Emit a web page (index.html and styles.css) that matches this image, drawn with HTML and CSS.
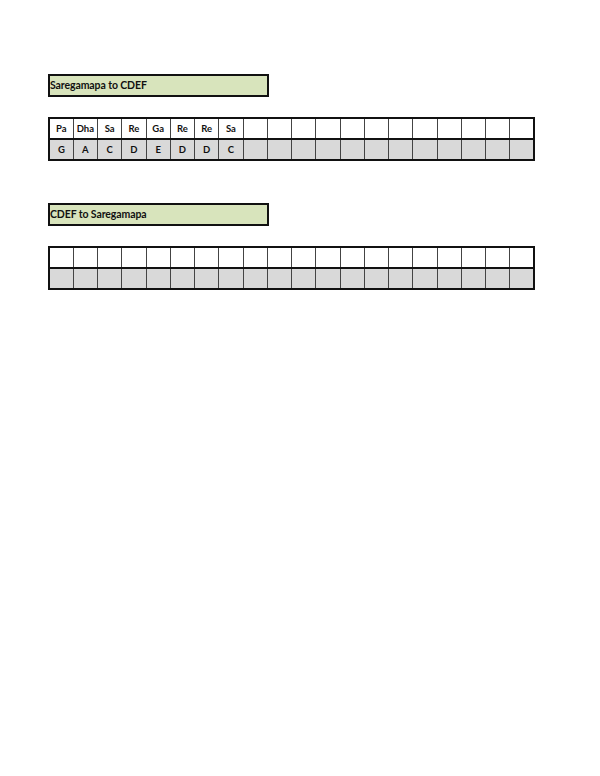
FILE: index.html
```html
<!DOCTYPE html>
<html>
<head>
<meta charset="utf-8">
<link rel="stylesheet" href="styles.css">
</head>
<body>
<div class="page">
  <section class="block">
    <div class="title">Saregamapa to CDEF</div>
    <table class="grid">
      <tr class="top">
        <td>Pa</td><td>Dha</td><td>Sa</td><td>Re</td><td>Ga</td><td>Re</td><td>Re</td><td>Sa</td>
        <td></td><td></td><td></td><td></td><td></td><td></td><td></td><td></td><td></td><td></td><td></td><td></td>
      </tr>
      <tr class="bottom">
        <td>G</td><td>A</td><td>C</td><td>D</td><td>E</td><td>D</td><td>D</td><td>C</td>
        <td></td><td></td><td></td><td></td><td></td><td></td><td></td><td></td><td></td><td></td><td></td><td></td>
      </tr>
    </table>
  </section>
  <section class="block second">
    <div class="title">CDEF to Saregamapa</div>
    <table class="grid">
      <tr class="top">
        <td></td><td></td><td></td><td></td><td></td><td></td><td></td><td></td><td></td><td></td>
        <td></td><td></td><td></td><td></td><td></td><td></td><td></td><td></td><td></td><td></td>
      </tr>
      <tr class="bottom">
        <td></td><td></td><td></td><td></td><td></td><td></td><td></td><td></td><td></td><td></td>
        <td></td><td></td><td></td><td></td><td></td><td></td><td></td><td></td><td></td><td></td>
      </tr>
    </table>
  </section>
</div>
</body>
</html>
```

FILE: styles.css
```css
html, body {
  margin: 0;
  padding: 0;
  background: #ffffff;
}
.page {
  padding: 74px 0 0 48px;
  font-family: Lato, "Liberation Sans", sans-serif;
  color: #111;
}
.block {
  display: flex;
  flex-direction: column;
  gap: 20px;
}
.block.second {
  margin-top: 42px;
}
.title {
  box-sizing: border-box;
  width: 221px;
  height: 23px;
  border: 2px solid #111;
  background: #d8e4bc;
  font-weight: 700;
  font-size: 10.5px;
  line-height: 19px;
  padding-left: 0px;
  letter-spacing: -0.1px;
}
.grid {
  border-collapse: collapse;
  table-layout: fixed;
  width: 487px;
  border: 2px solid #111;
}
.grid td {
  box-sizing: border-box;
  height: 21px;
  padding: 0;
  border-left: 1px solid #444;
  border-right: 1px solid #444;
  text-align: center;
  font-weight: 700;
  font-size: 9.5px;
  color: #111;
  overflow: hidden;
}
.grid tr.top td {
  background: #ffffff;
  border-bottom: 2px solid #111;
}
.grid tr.bottom td {
  background: #d9d9d9;
}
```
